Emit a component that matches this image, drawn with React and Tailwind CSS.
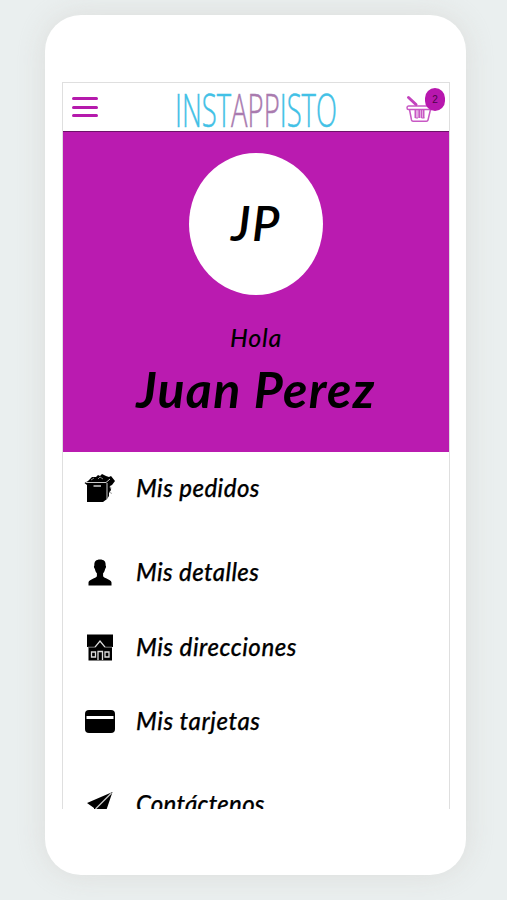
import React from 'react';

function BoxIcon() {
  return (
    <svg viewBox="0 0 32 28" className="w-8 h-7">
      <path d="M4 7 8 3l4 0 2-2 2 1 2-2 4 2 3 1 2-1 4 5-3 4-2 1 1 4-2 3v3l-2 3-4 3H3V11L0.500 9z" fill="#000" />
      <path d="M2 8.500h20l4-3.500M23 9v16" fill="none" stroke="#ccc" strokeWidth="1" />
      <path d="M7 6l3-2M14 5l2-2 3 2M25 18l3 1.500M25.500 13l2 1" fill="none" stroke="#999" strokeWidth="0.900" />
      <path d="M9.500 12h7.500" stroke="#aaa" strokeWidth="1.800" />
    </svg>
  );
}

function PersonIcon() {
  return (
    <svg viewBox="0 0 24 27" className="w-6 h-[27px]">
      <path d="M12 0.500c4 0 6 2 5.600 6 .8.500.5 2.500-.5 3.500-.3 2-1 3.200-2 4.200v3c1 2.300 8 2.800 8.400 6.300V26.500H.5v-3c.4-3.500 7.400-4 8.400-6.300v-3c-1-1-1.700-2.200-2-4.200-1-1-1.300-3-.5-3.500C6 2.500 8 .5 12 .5z" fill="#000" />
    </svg>
  );
}

function HouseIcon() {
  return (
    <svg viewBox="0 0 26 27" className="w-[26px] h-[27px]">
      <path d="M0 .5h26V13h-1v13.500H1.500V13H0z" fill="#000" />
      <g fill="none" stroke="#ddd" strokeWidth="1.300">
        <path d="M8 13.200 13 7l5 6.200" />
        <path d="M1 13.200h7M18 13.200h7" stroke="#888" strokeWidth="0.900" />
        <path d="M4.500 18h4v5h-4zM18 18h4v5h-4zM11 26v-8.500h4.500V26" />
      </g>
    </svg>
  );
}

function CardIcon() {
  return (
    <svg viewBox="0 0 30 23" className="w-[30px] h-[23px]">
      <rect width="30" height="23" rx="4" fill="#000" />
      <path d="M1.500 7.500h27" stroke="#fff" strokeWidth="3" />
    </svg>
  );
}

function PlaneIcon() {
  return (
    <svg viewBox="0 0 26 26" className="w-[26px] h-[26px]">
      <path d="M25.500 1 0 12l7 5v5l4-3 7 4z" fill="#000" />
      <path d="M24.500 2 8.500 18" stroke="#ccc" strokeWidth="1.300" />
    </svg>
  );
}

function BasketIcon() {
  return (
    <svg viewBox="0 0 28 28" className="w-7 h-7" fill="none" stroke="#c858c4" strokeWidth="1.500" strokeLinejoin="round">
      <path d="M2.500 12h23c2 0 2 3.500 0 3.500h-23c-2 0-2-3.500 0-3.500z" />
      <path d="M3.500 15.500 5.500 26q.3 1.200 1.500 1.200h13.500q1.200 0 1.500-1.200l2.500-10.500" />
      <path d="M2.500 3.500 10 10.500" strokeWidth="3" stroke="#c343bd" strokeLinecap="round" />
      <path d="M9.500 16v8M13.500 16v8M17.500 16v8" strokeWidth="2" />
      <path d="M9.500 24h2.500V16M15.500 16v8h3" strokeWidth="1" />
    </svg>
  );
}

const items = [
  { label: 'Mis pedidos', Icon: BoxIcon, row: 'mt-[18px]', text: 'tracking-[0.450px]' },
  { label: 'Mis detalles', Icon: PersonIcon, row: 'mt-12', text: 'tracking-[0.400px]' },
  { label: 'Mis direcciones', Icon: HouseIcon, row: 'mt-[39px]', text: 'tracking-[0.550px]' },
  { label: 'Mis tarjetas', Icon: CardIcon, row: 'mt-[38px]', text: 'tracking-[0.580px]' },
  { label: 'Contáctenos', Icon: PlaneIcon, row: 'mt-[47px]', text: 'tracking-[0.250px]' },
];

function Header() {
  return (
    <header className="flex items-center justify-between h-12 shrink-0 pl-[9px] pr-4 bg-white">
      <div className="flex flex-col gap-[5.500px] w-[26px]">
        <span className="h-[3px] rounded-full bg-[#b51aac]" />
        <span className="h-[3px] rounded-full bg-[#b51aac]" />
        <span className="h-[3px] rounded-full bg-[#b51aac]" />
      </div>
      <h1 className="flex justify-center w-[280px] -ml-[40px] -mr-[47px] -mb-2 -mt-1 font-['Open_Sans','Noto_Sans',sans-serif] font-light text-[46px] leading-[64px] text-[#42c1e6] [-webkit-text-stroke:0.500px] scale-x-[0.597] whitespace-nowrap">
        INST<span className="text-[#a97baf]">APP</span>ISTO
      </h1>
      <div className="relative mt-[2px] -mr-[1px]">
        <BasketIcon />
        <span className="absolute -top-[6px] left-[19px] flex items-center justify-center w-5 h-[23px] rounded-full bg-[#b817ae] font-['Liberation_Sans',sans-serif] text-[10px] text-[#4b0548]">
          2
        </span>
      </div>
    </header>
  );
}

export default function App() {
  return (
    <main className="w-full h-[900px] overflow-hidden bg-[#eaefef] pt-[15px] pl-[45px] font-['Lato','Open_Sans',sans-serif] text-black">
      <div className="w-[421px] h-[860px] rounded-[36px] bg-white pt-[67px] pl-[17px] shadow-[0_0_28px_rgba(205,200,195,0.450)]">
        <div className="flex flex-col w-[388px] h-[727px] overflow-hidden border border-b-0 border-[#dfdfdf]">
          <Header />
          <section className="flex flex-col items-center h-[321px] shrink-0 border-t border-[#6e1268] bg-[#ba1bb0] pt-[21px] italic">
            <div className="flex items-center justify-center w-[134px] h-[142px] rounded-[50%] bg-white">
              <span className="-mt-[3px] text-[48px] leading-none font-semibold tracking-[1.500px]">JP</span>
            </div>
            <p className="mt-[26px] text-[25px] leading-8 font-medium tracking-[0.800px]">Hola</p>
            <h2 className="mt-[8px] text-[50px] leading-[56px] font-bold tracking-[1.300px] whitespace-nowrap">Juan Perez</h2>
          </section>
          <ul>
            {items.map(({ label, Icon, row, text }) => (
              <li key={label} className={`flex items-center h-9 ${row}`}>
                <span className="flex items-center justify-center w-[73px] shrink-0">
                  <Icon />
                </span>
                <span className={`text-[24px] leading-9 font-medium italic whitespace-nowrap [-webkit-text-stroke:0.250px] ${text}`}>{label}</span>
              </li>
            ))}
          </ul>
        </div>
      </div>
    </main>
  );
}
